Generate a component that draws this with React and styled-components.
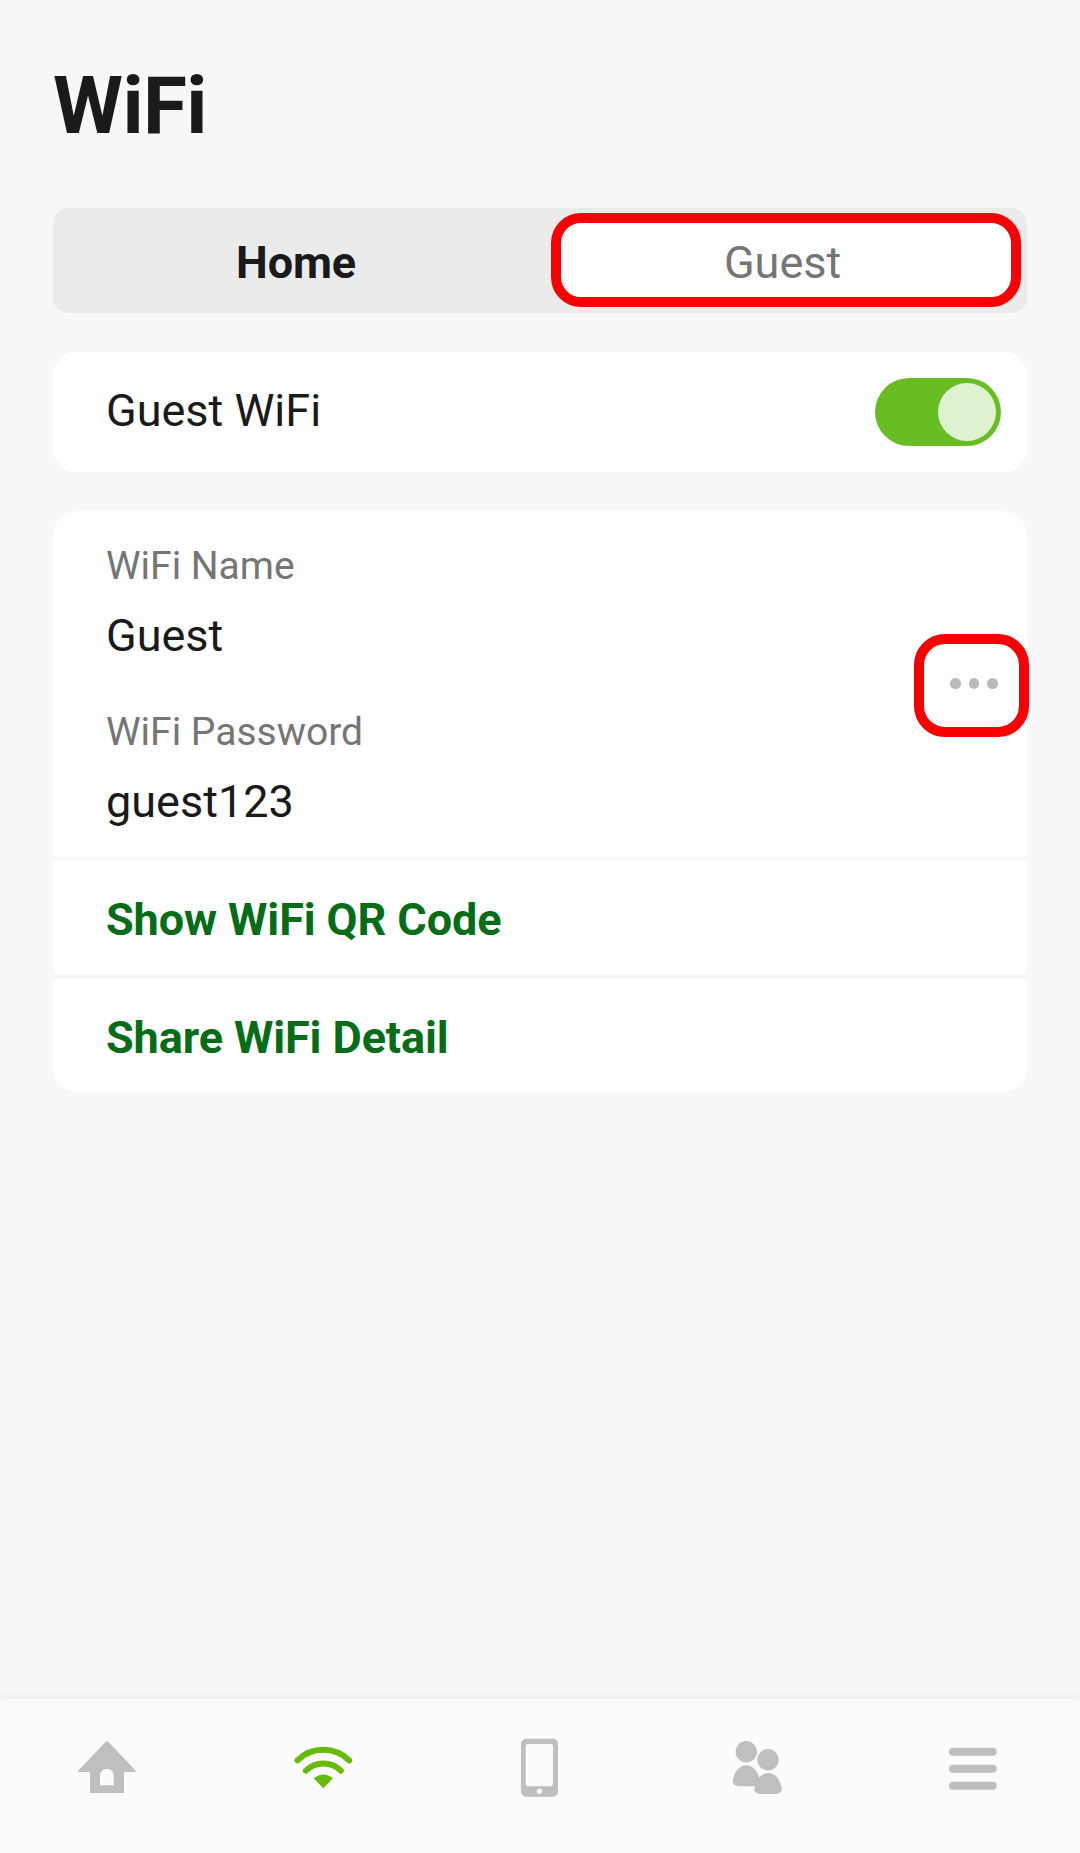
import React from "react";
import styled, { createGlobalStyle } from "styled-components";

const GlobalStyle = createGlobalStyle`
  * { box-sizing: border-box; }
  body {
    margin: 0;
    background: #f8f8f8;
    font-family: Roboto, "Liberation Sans", sans-serif;
    color: #1a1a1a;
  }
  button {
    font: inherit;
    color: inherit;
    background: none;
    border: 0;
    padding: 0;
    margin: 0;
  }
`;

const Screen = styled.div`
  display: flex;
  flex-direction: column;
  height: 1853px;
  width: 1080px;
  overflow: hidden;
`;

const Content = styled.main`
  flex: 1;
  display: flex;
  flex-direction: column;
  padding: 59px 53px 0;
`;

const Title = styled.h1`
  margin: 0 0 55px;
  font-size: 80px;
  line-height: 94px;
  font-weight: 700;
  letter-spacing: -0.6px;
`;

const Tabs = styled.div`
  display: grid;
  grid-template-columns: 1fr 1fr;
  height: 105px;
  margin-bottom: 39px;
  border-radius: 15px;
  background: #ebebeb;
`;

const Tab = styled.button`
  font-size: 45px;
  line-height: 52px;
  font-weight: 700;
  letter-spacing: -0.1px;
  padding: 4px 1px 0 0;
`;

const GuestTab = styled(Tab)`
  margin: 5.4px 6.4px 6.4px 10.600px;
  padding: 5px 2px 0 0;
  border: 10px solid #f80000;
  border-radius: 30px;
  background: #fff;
  color: #757575;
  font-weight: 400;
  letter-spacing: 0;
  text-indent: -4px;
`;

const ToggleCard = styled.section`
  display: flex;
  align-items: center;
  justify-content: space-between;
  height: 120px;
  margin-bottom: 39px;
  padding: 0 26px 0 53px;
  border-radius: 24px;
  background: #fff;
`;

const Value = styled.div`
  font-size: 45px;
  line-height: 52px;
  margin-top: -2px;
`;

const Label = styled.div`
  font-size: 39px;
  line-height: 48px;
  color: #757575;
`;

const Switch = styled.button`
  display: flex;
  justify-content: flex-end;
  align-items: center;
  width: 126px;
  height: 68px;
  padding: 0 5px;
  border-radius: 34px;
  background: #67bd22;
`;

const Knob = styled.span`
  width: 58px;
  height: 58px;
  border-radius: 50%;
  background: #dff2cf;
`;

const NetworkCard = styled.section`
  display: flex;
  flex-direction: column;
  gap: 5px;
  border-radius: 24px;
`;

const Details = styled.div`
  display: flex;
  justify-content: space-between;
  height: 345px;
  padding: 31px 0 0 53px;
  border-radius: 24px 24px 0 0;
  background: #fff;
`;

const Fields = styled.div`
  display: flex;
  flex-direction: column;
  gap: 46px;
`;

const Field = styled.div`
  display: flex;
  flex-direction: column;
  gap: 22px;
`;

const MoreButton = styled.button`
  display: flex;
  align-items: center;
  justify-content: center;
  gap: 8px;
  width: 115px;
  height: 103px;
  margin: 92px -1.6px 0 0;
  padding: 0 0 4px 6px;
  border: 10px solid #f80000;
  border-radius: 31px;
`;

const Dot = styled.span`
  width: 10.6px;
  height: 10.6px;
  border-radius: 50%;
  background: #bababa;
`;

const ActionRow = styled.button`
  height: ${(p) => p.$height}px;
  padding: 5px 53px 0;
  border-radius: ${(p) => (p.$last ? "0 0 24px 24px" : "0")};
  background: #fff;
  color: #056c18;
  font-size: 45px;
  line-height: 52px;
  font-weight: 700;
  letter-spacing: -0.1px;
  text-align: left;
`;

const NavBar = styled.nav`
  display: grid;
  grid-template-columns: repeat(5, 1fr);
  height: 154px;
  padding-top: 32px;
  background: #fbfbfb;
  box-shadow: 0 0 10px rgba(0, 0, 0, 0.07);
`;

const NavItem = styled.button`
  display: flex;
  justify-content: center;
  align-items: flex-start;
  color: ${(p) => (p.$active ? "#66bb06" : "#bfbfbf")};

  svg {
    width: 72px;
    height: 72px;
  }
`;

const HomeIcon = () => (
  <svg viewBox="0 0 72 72">
    <path
      fill="currentColor"
      fillRule="evenodd"
      d="M33.800 10.800Q35 9.500 36.200 10.800L63.400 39.200Q64.600 41 62.800 41H52V62H18V41H7.200Q5.400 41 6.600 39.200ZM28 54.300H41.700V45C41.700 40.500 39 38 34.900 38S28 40.500 28 45Z"
    />
  </svg>
);

const WifiIcon = () => (
  <svg viewBox="0 0 72 72" fill="none" stroke="currentColor" strokeWidth="6" strokeLinecap="round">
    <path d="M9.500 29.300A37 37 0 0 1 61.200 29.300" />
    <path d="M17.900 39.700A24.600 24.600 0 0 1 52.800 39.700" />
    <path fill="currentColor" stroke="none" d="M25.700 47.300Q35.300 39.700 45 47.300L35.300 57.300Z" />
  </svg>
);

const PhoneIcon = () => (
  <svg viewBox="0 0 72 72" fill="currentColor">
    <path
      fillRule="evenodd"
      d="M22 7.700H49a5 5 0 0 1 5 5V60.700a5 5 0 0 1-5 5H22a5 5 0 0 1-5-5V12.700a5 5 0 0 1 5-5ZM24 12.900a2.300 2.300 0 0 0-2.300 2.300V53a2.300 2.300 0 0 0 2.300 2.300H46.700A2.300 2.300 0 0 0 49 53V15.200a2.300 2.300 0 0 0-2.300-2.300ZM35.500 57.600a2.700 2.700 0 1 0 0 5.400a2.700 2.700 0 0 0 0-5.400Z"
    />
  </svg>
);

const PeopleIcon = () => (
  <svg viewBox="0 0 72 72" fill="currentColor">
    <circle cx="26.300" cy="20.700" r="10.700" />
    <circle cx="48" cy="28.700" r="10.700" />
    <path d="M26.200 34.300C18.500 34.300 13.300 42.500 12.700 51.500Q14.500 55.300 20 55.300H36L39.300 46.500C37 39 32 34.300 26.200 34.300Z" />
    <path d="M48.300 42C40.500 42 35 50.500 34.200 59.500Q36.500 63 41.500 63H55Q60 63 62 59.300C61 50.500 56.500 42 48.300 42Z" />
  </svg>
);

const MenuIcon = () => (
  <svg viewBox="0 0 72 72" stroke="currentColor" strokeWidth="8" strokeLinecap="round">
    <path d="M17 20.700H56.700M17 37.700H56.700M17 54.700H56.700" />
  </svg>
);

const fields = [
  { label: "WiFi Name", value: "Guest" },
  { label: "WiFi Password", value: "guest123" },
];

const navItems = [
  { name: "Home", Icon: HomeIcon },
  { name: "WiFi", Icon: WifiIcon, active: true },
  { name: "Devices", Icon: PhoneIcon },
  { name: "People", Icon: PeopleIcon },
  { name: "Menu", Icon: MenuIcon },
];

export default function App() {
  return (
    <>
      <GlobalStyle />
      <Screen>
        <Content>
          <Title>WiFi</Title>
          <Tabs>
            <Tab>Home</Tab>
            <GuestTab>Guest</GuestTab>
          </Tabs>
          <ToggleCard>
            <Value>Guest WiFi</Value>
            <Switch role="switch" aria-checked="true" aria-label="Guest WiFi">
              <Knob />
            </Switch>
          </ToggleCard>
          <NetworkCard>
            <Details>
              <Fields>
                {fields.map((f) => (
                  <Field key={f.label}>
                    <Label>{f.label}</Label>
                    <Value>{f.value}</Value>
                  </Field>
                ))}
              </Fields>
              <MoreButton aria-label="More">
                <Dot />
                <Dot />
                <Dot />
              </MoreButton>
            </Details>
            <ActionRow $height={113}>Show WiFi QR Code</ActionRow>
            <ActionRow $height={113} $last>
              Share WiFi Detail
            </ActionRow>
          </NetworkCard>
        </Content>
        <NavBar>
          {navItems.map(({ name, Icon, active }) => (
            <NavItem key={name} $active={active} aria-label={name}>
              <Icon />
            </NavItem>
          ))}
        </NavBar>
      </Screen>
    </>
  );
}
